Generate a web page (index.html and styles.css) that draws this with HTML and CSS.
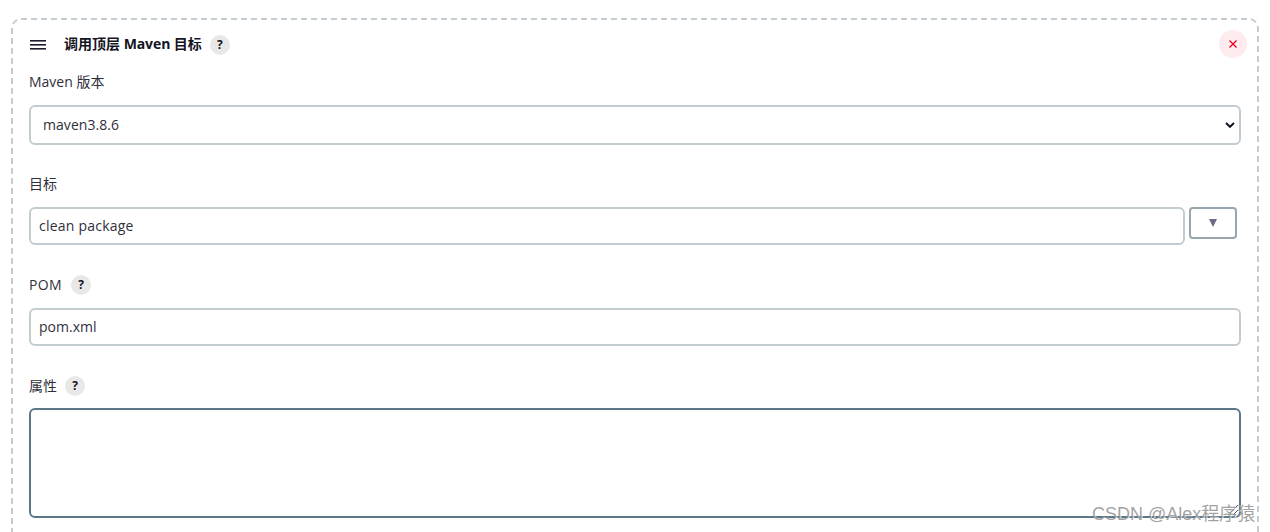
FILE: index.html
```
<!DOCTYPE html>
<html lang="zh-CN">
<head>
<meta charset="utf-8">
<title>Maven</title>
<link rel="stylesheet" href="styles.css">
</head>
<body>
<main class="step">
  <header class="step-header">
    <svg class="handle" width="16" height="10" viewBox="0 0 16 10"><path d="M0 1h16M0 5h16M0 9h16" stroke="#1d1d2b" stroke-width="2" shape-rendering="crispEdges"/><path d="M0 2h16M0 6h16M0 10h16" stroke="#fff" stroke-width=".8"/></svg>
    <h1 class="title">调用顶层 <span class="title-latin">Maven</span> 目标</h1>
    <span class="help">?</span>
    <button class="remove" aria-label="删除"><svg width="8" height="8" viewBox="0 0 8 8"><path d="M.5.5l7 7M7.5.5l-7 7" stroke="#e6001f" stroke-width="1.3"/></svg></button>
  </header>
  <section class="field field-version">
    <div class="label"><span class="latin-maven">Maven</span> 版本</div>
    <div class="control select"><span class="val-version">maven3.8.6</span><svg class="chevron" width="10" height="6" viewBox="0 0 10 6"><path d="M1 1l4 3.8L9 1" fill="none" stroke="#14141f" stroke-width="2"/></svg></div>
  </section>
  <section class="field field-goal">
    <div class="label">目标</div>
    <div class="row">
      <div class="control input"><span class="val-goal">clean package</span></div>
      <button class="expand" aria-label="展开"><svg width="8" height="8" viewBox="0 0 8 8"><path d="M0 0h8L4 8z" fill="#6b6b85"/></svg></button>
    </div>
  </section>
  <section class="field field-pom">
    <div class="label"><span class="latin-pom">POM</span><span class="help">?</span></div>
    <div class="control input"><span class="val-pom">pom.xml</span></div>
  </section>
  <section class="field field-props">
    <div class="label">属性<span class="help">?</span></div>
    <div class="control area"><svg class="grip" width="10" height="10" viewBox="0 0 10 10"><path d="M0 10L10 0M5 10l5-5" stroke="#555" stroke-width="1"/></svg></div>
  </section>
</main>
<div class="watermark">CSDN @Alex程序猿</div>
</body>
</html>
```
FILE: styles.css
```
* { box-sizing: border-box; }
body {
  margin: 0;
  padding: 18px 0 0 11px;
  height: 532px;
  overflow: hidden;
  background: #fff;
  color: #14141f;
  font: 400 14px/20px "Open Sans", "Noto Sans CJK SC", sans-serif;
}
.step {
  width: 1248px;
  height: 514px;
  padding: 10px 16px 0;
  border: 2px dashed #c3cdd1;
  border-bottom: 0;
  border-radius: 10px 10px 0 0;
}
.step-header { display: flex; align-items: center; height: 28px; }
.handle { margin: 2px 18px 0 1px; }
.title { margin: 0; font-size: 14px; line-height: 20px; font-weight: 700; white-space: nowrap; }
.title-latin { letter-spacing: -0.1px; }
.help {
  display: inline-flex;
  align-items: center;
  justify-content: center;
  width: 20px;
  height: 20px;
  margin-left: 8px;
  border-radius: 50%;
  background: #e8e8e8;
  color: #14141f;
  font: 700 12px/20px "Open Sans", sans-serif;
}
.step-header .help { margin-top: 2px; }
.remove {
  display: flex;
  align-items: center;
  justify-content: center;
  width: 28px;
  height: 28px;
  margin: 0 -6px 0 auto;
  padding: 0;
  border: 0;
  border-radius: 50%;
  background: #fdebed;
}
.label { display: flex; align-items: center; height: 20px; color: #30303c; white-space: pre; }
.control { color: #30303c; }
.latin-pom { width: 34px; letter-spacing: 0.4px; }
.val-version { letter-spacing: 0.06px; }
.val-goal { letter-spacing: 0.22px; }
.field-version { padding-top: 14px; }
.field-goal { padding-top: 29px; }
.field-pom { padding-top: 30px; }
.field-props { padding-top: 30px; }
.control {
  display: flex;
  align-items: center;
  border: 2px solid #c3cdd1;
  border-radius: 6px;
}
.select { height: 40px; margin-top: 13px; padding: 0 4px 0 12px; }
.chevron { margin-left: auto; }
.input { flex: 1; height: 38px; padding: 0 8px; }
.row { display: flex; margin-top: 13px; padding-right: 4px; gap: 4px; }
.field-pom .input { margin-top: 13px; }
.expand {
  display: flex;
  align-items: center;
  justify-content: center;
  width: 48px;
  height: 32px;
  padding: 0;
  border: 2px solid #98a6af;
  border-radius: 4px;
  background: #fff;
}
.area {
  align-items: flex-end;
  justify-content: flex-end;
  height: 110px;
  margin-top: 12px;
  padding: 1px;
  border-color: #5c7888;
}
.watermark {
  position: absolute;
  left: 1092px;
  top: 501px;
  color: rgba(145, 145, 145, .85);
  font: 18px/27px "Liberation Sans", "Noto Sans CJK SC", sans-serif;
  text-shadow: 1px 1px 0 rgba(255, 255, 255, .7);
  white-space: nowrap;
}
```
